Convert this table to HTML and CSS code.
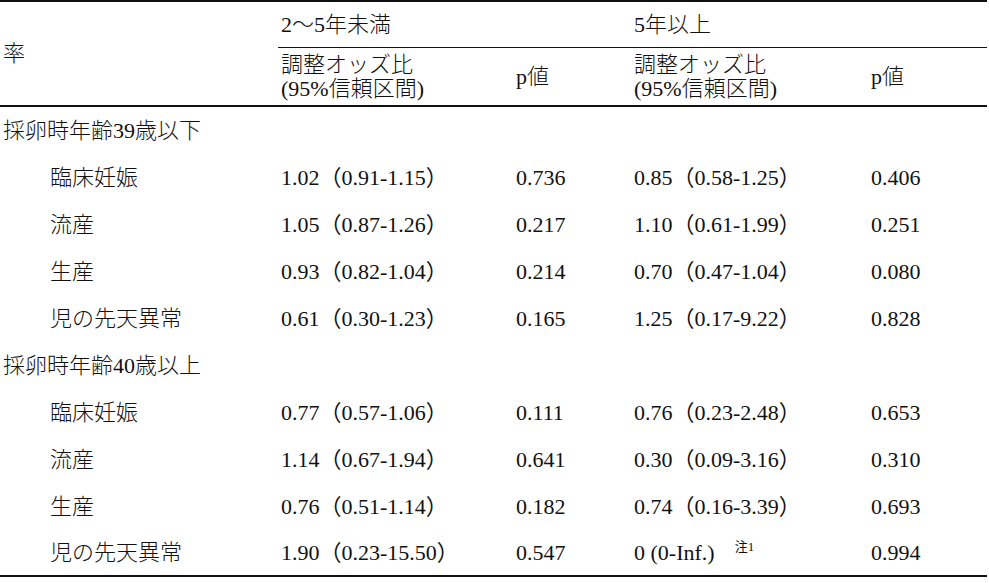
FILE: index.html
```html
<!DOCTYPE html>
<html lang="ja">
<head>
<meta charset="utf-8">
<title>調整オッズ比</title>
<link rel="stylesheet" href="styles.css">
</head>
<body>
<table class="tbl">
  <colgroup>
    <col class="w-label">
    <col class="w-or">
    <col class="w-p">
    <col class="w-or2">
    <col class="w-p2">
  </colgroup>
  <thead>
    <tr class="h1">
      <th rowspan="2" class="label">率</th>
      <th colspan="2" class="grp"><span class="num">2</span>〜<span class="num">5</span>年未満</th>
      <th colspan="2" class="grp"><span class="num">5</span>年以上</th>
    </tr>
    <tr class="h2">
      <th class="cell">調整オッズ比<br><span class="num">(95%</span>信頼区間<span class="num">)</span></th>
      <th class="cell"><span class="num">p</span>値</th>
      <th class="cell">調整オッズ比<br><span class="num">(95%</span>信頼区間<span class="num">)</span></th>
      <th class="cell"><span class="num">p</span>値</th>
    </tr>
  </thead>
  <tbody>
    <tr class="row sec"><td colspan="5" class="label">採卵時年齢<span class="num">39</span>歳以下</td></tr>
    <tr class="row"><td class="sub">臨床妊娠</td><td class="cell">1.02（0.91-1.15）</td><td class="cell">0.736</td><td class="cell">0.85（0.58-1.25）</td><td class="cell">0.406</td></tr>
    <tr class="row"><td class="sub">流産</td><td class="cell">1.05（0.87-1.26）</td><td class="cell">0.217</td><td class="cell">1.10（0.61-1.99）</td><td class="cell">0.251</td></tr>
    <tr class="row"><td class="sub">生産</td><td class="cell">0.93（0.82-1.04）</td><td class="cell">0.214</td><td class="cell">0.70（0.47-1.04）</td><td class="cell">0.080</td></tr>
    <tr class="row"><td class="sub">児の先天異常</td><td class="cell">0.61（0.30-1.23）</td><td class="cell">0.165</td><td class="cell">1.25（0.17-9.22）</td><td class="cell">0.828</td></tr>
    <tr class="row sec"><td colspan="5" class="label">採卵時年齢<span class="num">40</span>歳以上</td></tr>
    <tr class="row"><td class="sub">臨床妊娠</td><td class="cell">0.77（0.57-1.06）</td><td class="cell">0.111</td><td class="cell">0.76（0.23-2.48）</td><td class="cell">0.653</td></tr>
    <tr class="row"><td class="sub">流産</td><td class="cell">1.14（0.67-1.94）</td><td class="cell">0.641</td><td class="cell">0.30（0.09-3.16）</td><td class="cell">0.310</td></tr>
    <tr class="row"><td class="sub">生産</td><td class="cell">0.76（0.51-1.14）</td><td class="cell">0.182</td><td class="cell">0.74（0.16-3.39）</td><td class="cell">0.693</td></tr>
    <tr class="row last"><td class="sub">児の先天異常</td><td class="cell">1.90（0.23-15.50）</td><td class="cell">0.547</td><td class="cell">0 (0-Inf.)<sup class="note">注1</sup></td><td class="cell">0.994</td></tr>
  </tbody>
</table>
</body>
</html>
```

FILE: styles.css
```css
html, body {
  margin: 0;
  padding: 0;
  background: #fff;
}

.tbl {
  width: 987px;
  table-layout: fixed;
  border-collapse: separate;
  border-spacing: 0;
  border-top: 2px solid #111;
  font-family: "Liberation Serif", "Noto Sans CJK JP", serif;
  font-size: 22px;
  font-weight: 400;
  line-height: 24px;
  color: #111;
}

.w-label { width: 278px; }
.w-or { width: 235px; }
.w-p { width: 118px; }
.w-or2 { width: 237px; }
.w-p2 { width: 119px; }

.tbl th,
.tbl td {
  padding: 0;
  text-align: left;
  vertical-align: middle;
  white-space: nowrap;
}

.tbl th {
  font-weight: 300;
}

.tbl .h1 { height: 46px; }
.tbl .h2 { height: 59px; }
.tbl .row { height: 47px; }

.tbl .grp {
  padding-left: 3px;
  border-bottom: 1.5px solid #111;
}

.tbl .h2 th {
  border-bottom: 2px solid #111;
}

.tbl .label {
  padding-left: 3px;
  font-weight: 300;
}

.tbl .h1 .label {
  border-bottom: 2px solid #111;
}

.tbl .sub {
  padding-left: 50px;
  font-weight: 300;
}

.tbl .cell {
  padding-left: 3px;
}

.tbl .num {
  font-weight: 400;
}

.tbl .last td {
  border-bottom: 2px solid #111;
}

.note {
  margin-left: 20px;
  font-size: 13px;
  line-height: 0;
  vertical-align: 9px;
}
```
